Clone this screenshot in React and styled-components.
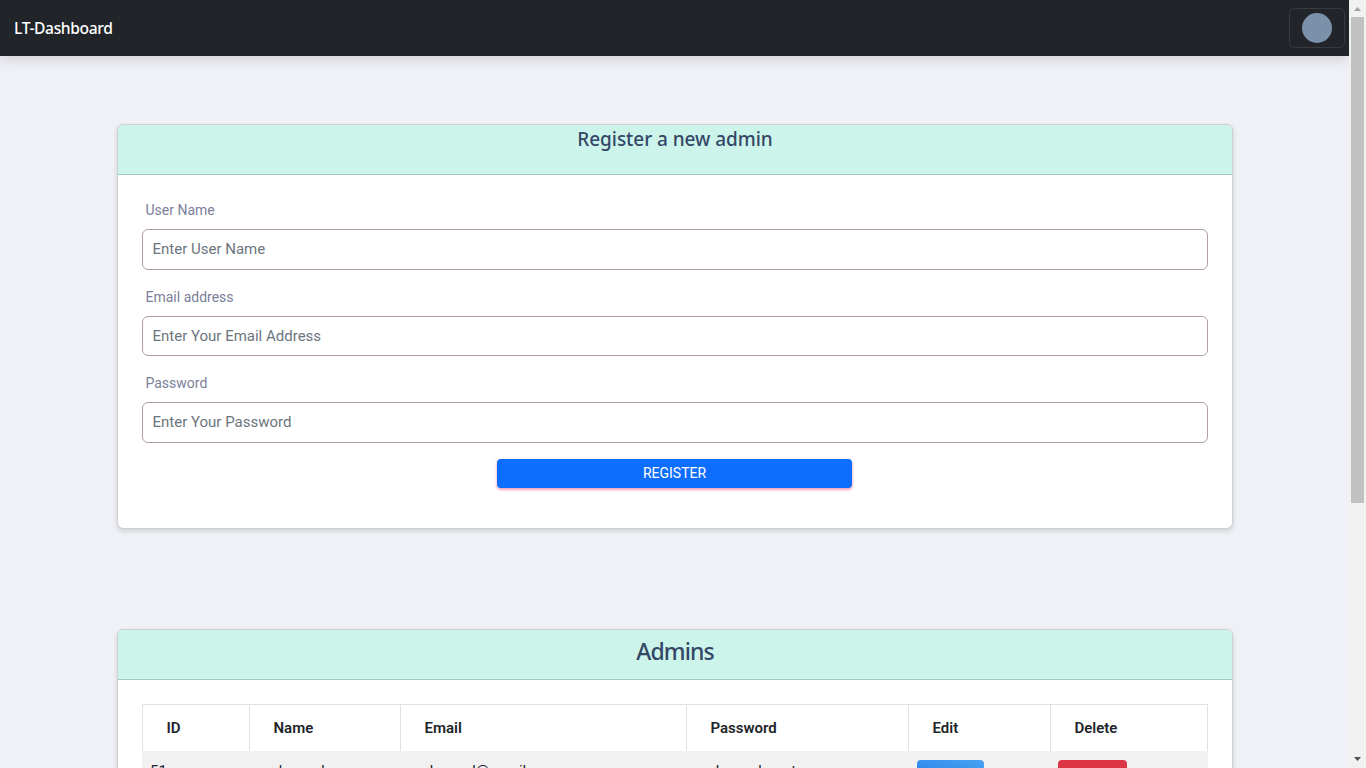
import React from "react";
import styled, { createGlobalStyle } from "styled-components";

const Global = createGlobalStyle`
  *, *::before, *::after { box-sizing: border-box; }
  body { margin: 0; overflow: hidden; background: #f0f1f6; font-family: Roboto, sans-serif; font-size: 15px; color: #212529; }
`;
const Shell = styled.div`display: flex; height: 768px; overflow: hidden;`;
const Page = styled.div`flex: 1; min-width: 0; height: 768px; overflow: hidden;`;
const Navbar = styled.nav`
  display: flex; align-items: center; justify-content: space-between;
  height: 56px; padding: 0 4px 0 14px; background: #212529;
  box-shadow: 0 4px 12px rgba(0, 0, 0, 0.13);
`;
const Brand = styled.span`
  font: 500 15.6px/24px "Noto Sans", sans-serif; color: #fff;
  letter-spacing: ${(p) => p.$track}px;
`;
const AvatarButton = styled.button`
  display: flex; align-items: center; justify-content: center;
  width: 56px; height: 40px; padding: 0; background: transparent;
  border: 1px solid #373b3e; border-radius: 6px;
`;
const Avatar = styled.span`width: 30px; height: 30px; border-radius: 50%; background: #7b91aa;`;
const Content = styled.main`padding: 68px 116px 0 117px;`;
const Card = styled.section`
  height: ${(p) => p.$height}px; margin-bottom: 100px; background: #fff;
  border: 1px solid #cfd0d1; border-radius: 6px; background-clip: padding-box;
  box-shadow: 0 2px 5px rgba(0, 0, 0, 0.14);
`;
const CardHeader = styled.header`
  height: 50px; padding-top: ${(p) => p.$top}px; text-align: center;
  background: #ccf4ea; border-bottom: 1px solid #a1c9c2; border-radius: 5px 5px 0 0;
`;
const Title = styled.h5`
  margin: 0; color: #344767;
  font: 500 ${(p) => p.$size}px/${(p) => p.$line}px "Noto Sans", sans-serif;
  letter-spacing: ${(p) => p.$track}px;
`;
const Form = styled.form`padding: 24px; display: flex; flex-direction: column;`;
const Label = styled.label`
  height: 30px; padding-left: 3.5px; font-size: 14px; line-height: 22px; color: #7b809a;
`;
const Field = styled.div`height: ${(p) => p.$height}px; display: flex; flex-direction: column;`;
const Input = styled.input`
  height: ${(p) => p.$height}px; width: 100%; padding: 0 9.5px 1px; background: #fff;
  border: 1px solid #b09fa5; border-radius: 6px; outline: 0;
  font: 15px Roboto, sans-serif; color: #495057;
  &::placeholder { color: #6c757d; opacity: 1; }
`;
const RegisterButton = styled.button`
  align-self: center; width: 355px; height: 29px; padding: 0; margin-right: 1px;
  color: #fff; background: #0d6efd; border: 0; border-radius: 4px;
  font: 400 14px/29px Roboto, sans-serif;
  box-shadow: 0 2px 3px rgba(233, 30, 99, 0.3), 0 1px 3px rgba(233, 30, 99, 0.25);
`;
const TableArea = styled.div`padding: 24px;`;
const Table = styled.table`
  width: 1066px; table-layout: fixed; border-collapse: separate; border-spacing: 0; font-size: 15px;
`;
const HeadCell = styled.th`
  width: ${(p) => p.$width}px; height: 47px; padding: 0 23.5px; text-align: left;
  font-weight: 600; border: 0 solid #dee2e6; border-width: 1px 0 0 1px;
  &:last-child { border-right-width: 1px; }
`;
const Cell = styled.td`
  height: 48px; padding: 8px; vertical-align: top; line-height: 24px; background: #f1f1f1;
`;
const Action = styled.button`
  display: block; width: ${(p) => p.$width}px; height: 31px; border: 0; border-radius: 4px;
  margin: 1px 0 0 ${(p) => p.$indent}px;
  color: #fff; font: 500 14px Roboto, sans-serif; background: ${(p) => p.$fill};
`;
const Scrollbar = styled.aside`
  display: flex; flex-direction: column; align-items: center;
  width: 17px; height: 768px; background: #f1f1f1;
`;
const Arrow = styled.svg`display: block; width: 17px; height: 17px; flex: none;`;
const Track = styled.div`flex: 1; width: 13px;`;
const Thumb = styled.div`height: 486px; background: #c1c1c1;`;

const fields = [
  { label: "User Name", hint: "Enter User Name", type: "text", block: 87, box: 41 },
  { label: "Email address", hint: "Enter Your Email Address", type: "email", block: 86, box: 40 },
  { label: "Password", hint: "Enter Your Password", type: "password", block: 87, box: 41 },
];
const columns = [
  ["ID", 107], ["Name", 151], ["Email", 286], ["Password", 222], ["Edit", 142], ["Delete", 158],
];

export default function App() {
  return (
    <>
      <Global />
      <Shell>
        <Page>
          <Navbar>
            <Brand $track={-0.37}>LT-Dashboard</Brand>
            <AvatarButton aria-label="Account"><Avatar /></AvatarButton>
          </Navbar>
          <Content>
            <Card $height={405}>
              <CardHeader $top={2}><Title $size={19} $line={24} $track={-0.05}>Register a new admin</Title></CardHeader>
              <Form>
                {fields.map((f) => (
                  <Field key={f.label} $height={f.block}>
                    <Label>{f.label}</Label>
                    <Input $height={f.box} type={f.type} placeholder={f.hint} />
                  </Field>
                ))}
                <RegisterButton type="button">REGISTER</RegisterButton>
              </Form>
            </Card>
            <Card $height={405}>
              <CardHeader $top={7}><Title $size={23} $line={28} $track={-0.9}>Admins</Title></CardHeader>
              <TableArea>
                <Table>
                  <thead>
                    <tr>{columns.map(([name, width]) => <HeadCell key={name} $width={width}>{name}</HeadCell>)}</tr>
                  </thead>
                  <tbody>
                    <tr>
                      <Cell>51</Cell>
                      <Cell>mohamed</Cell>
                      <Cell>mohamed@gmail.com</Cell>
                      <Cell>mohamedmost</Cell>
                      <Cell><Action $width={67} $indent={1} $fill="linear-gradient(195deg, #49a3f1, #1a73e8)">EDIT</Action></Cell>
                      <Cell><Action $width={69} $indent={0} $fill="#dc3545">DELETE</Action></Cell>
                    </tr>
                  </tbody>
                </Table>
              </TableArea>
            </Card>
          </Content>
        </Page>
        <Scrollbar>
          <Arrow viewBox="0 0 17 17"><path d="M5 11h7L8.500 7z" fill="#a3a3a3" /></Arrow>
          <Track><Thumb /></Track>
          <Arrow viewBox="0 0 17 17"><path d="M5 6h7L8.500 10z" fill="#505050" /></Arrow>
        </Scrollbar>
      </Shell>
    </>
  );
}
